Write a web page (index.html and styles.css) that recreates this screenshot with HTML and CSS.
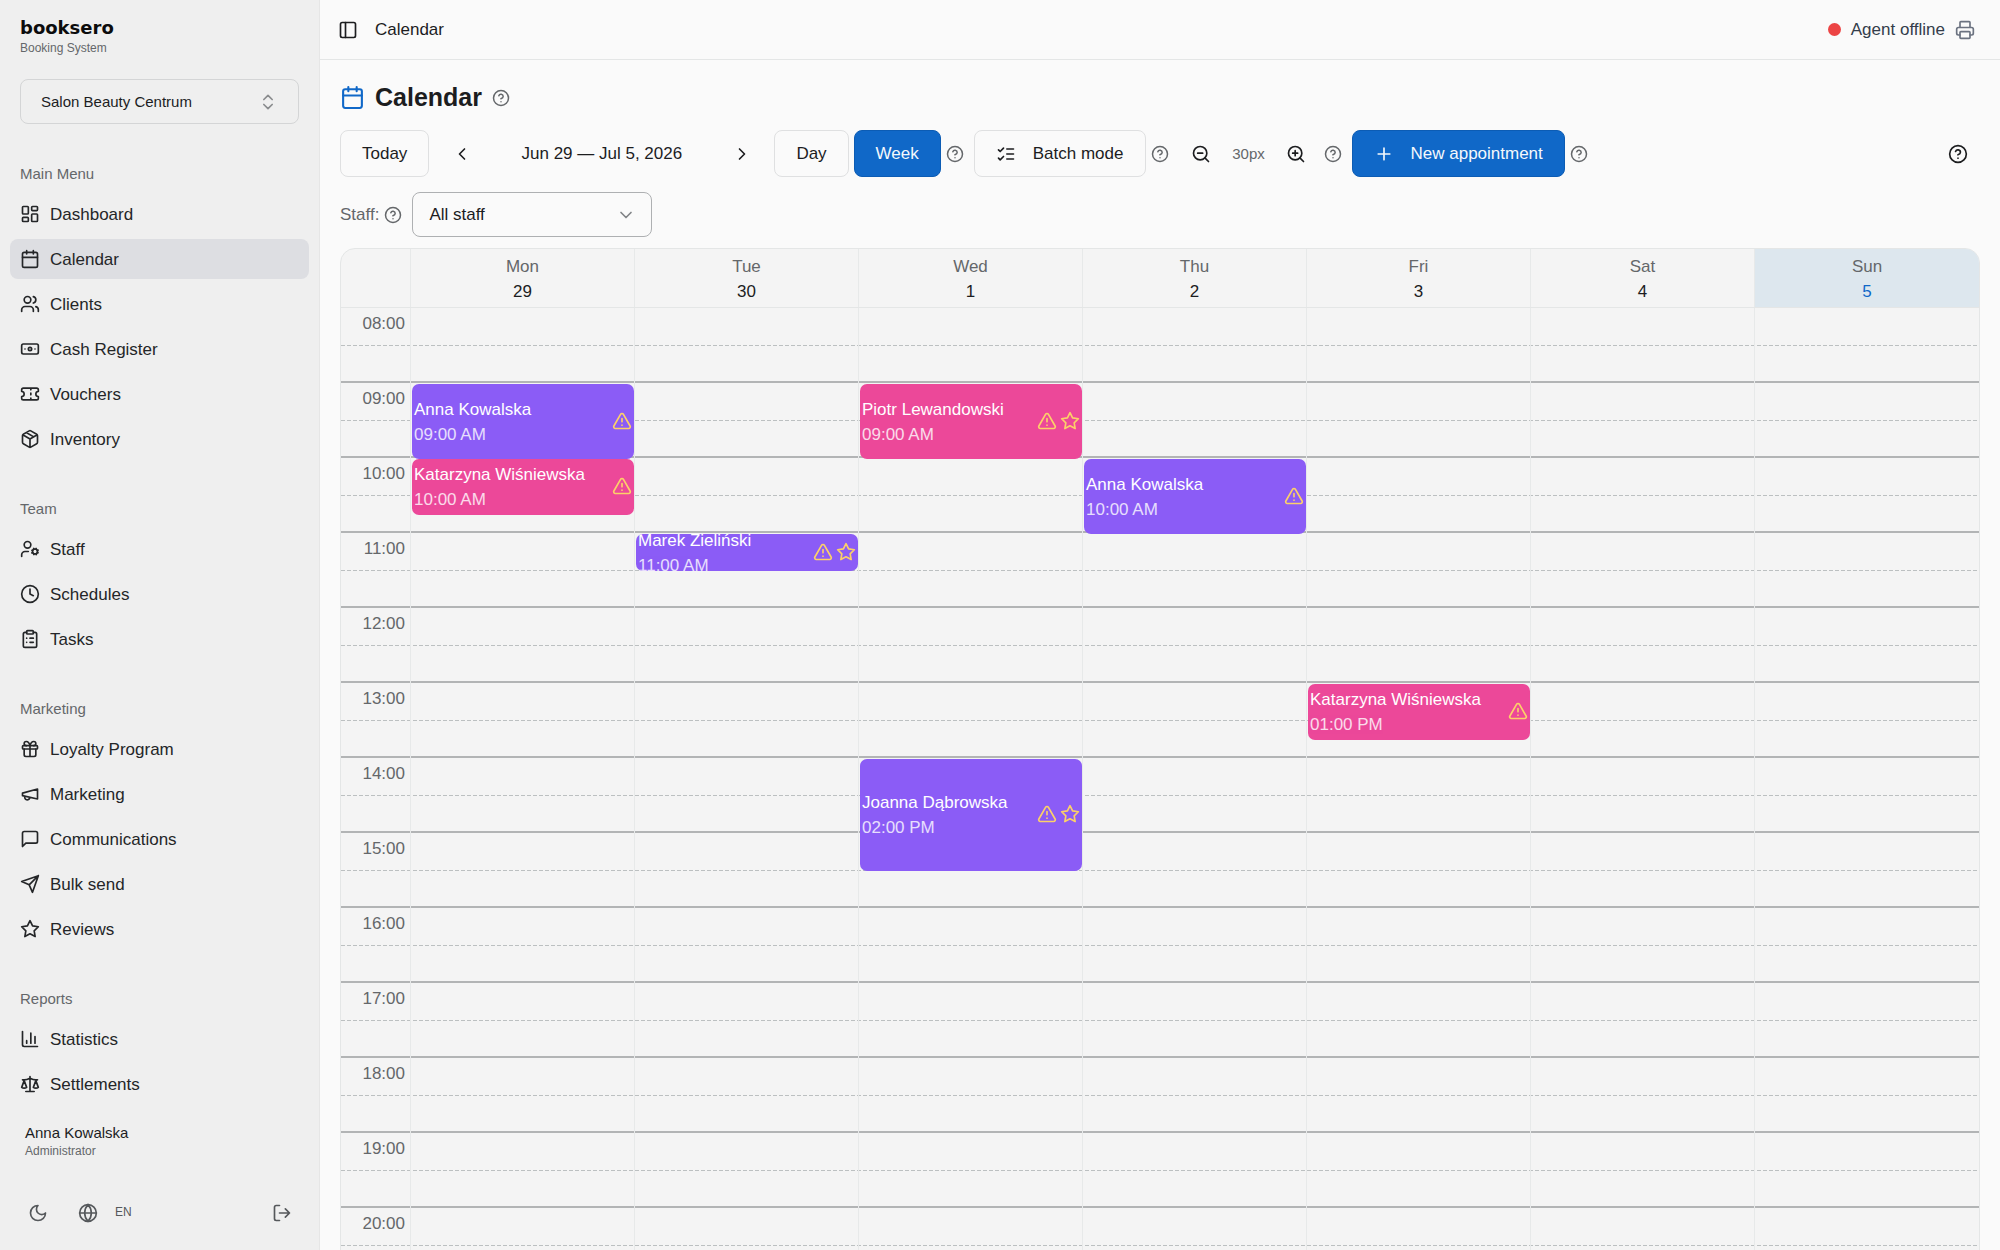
FILE: index.html
```html
<!DOCTYPE html>
<html lang="en">
<head>
<meta charset="utf-8">
<meta name="viewport" content="width=device-width, initial-scale=1">
<title>Calendar – booksero</title>
<link rel="stylesheet" href="styles.css">
</head>
<body>
<svg class="sprite" aria-hidden="true">
  <symbol id="calendar" viewBox="0 0 24 24"><path d="M8 2v4M16 2v4M3 10h18"/><rect width="18" height="18" x="3" y="4" rx="2"/></symbol>
  <symbol id="help" viewBox="0 0 24 24"><circle cx="12" cy="12" r="10"/><path d="M9.09 9a3 3 0 0 1 5.83 1c0 2-3 3-3 3M12 17h.01"/></symbol>
  <symbol id="warning" viewBox="0 0 24 24"><path d="m21.73 18-8-14a2 2 0 0 0-3.48 0l-8 14A2 2 0 0 0 4 21h16a2 2 0 0 0 1.73-3M12 9v4M12 17h.01"/></symbol>
  <symbol id="star" viewBox="0 0 24 24"><path d="m12 2 3.09 6.26L22 9.27l-5 4.87 1.18 6.88L12 17.77l-6.18 3.25L7 14.14 2 9.27l6.91-1.01L12 2z"/></symbol>
</svg>
<div class="app">
  <aside class="sidebar">
    <div class="brand">
      <span class="brand-name">booksero</span>
      <span class="brand-sub">Booking System</span>
    </div>
    <button class="salon" type="button">
      <span>Salon Beauty Centrum</span>
      <svg class="icon" viewBox="0 0 24 24"><path d="m7 15 5 5 5-5M7 9l5-5 5 5"/></svg>
    </button>
    <nav class="nav">
      <section class="group">
        <h2 class="group-title">Main Menu</h2>
        <a class="item" href="#"><svg class="icon" viewBox="0 0 24 24"><rect width="7" height="9" x="3" y="3" rx="1"/><rect width="7" height="5" x="14" y="3" rx="1"/><rect width="7" height="9" x="14" y="12" rx="1"/><rect width="7" height="5" x="3" y="16" rx="1"/></svg>Dashboard</a>
        <a class="item active" href="#" aria-current="page"><svg class="icon"><use href="#calendar"/></svg>Calendar</a>
        <a class="item" href="#"><svg class="icon" viewBox="0 0 24 24"><path d="M16 21v-2a4 4 0 0 0-4-4H6a4 4 0 0 0-4 4v2"/><circle cx="9" cy="7" r="4"/><path d="M22 21v-2a4 4 0 0 0-3-3.87M16 3.13a4 4 0 0 1 0 7.75"/></svg>Clients</a>
        <a class="item" href="#"><svg class="icon" viewBox="0 0 24 24"><rect width="20" height="12" x="2" y="6" rx="2"/><circle cx="12" cy="12" r="2"/><path d="M6 12h.01M18 12h.01"/></svg>Cash Register</a>
        <a class="item" href="#"><svg class="icon" viewBox="0 0 24 24"><path d="M2 9a3 3 0 0 1 0 6v2a2 2 0 0 0 2 2h16a2 2 0 0 0 2-2v-2a3 3 0 0 1 0-6V7a2 2 0 0 0-2-2H4a2 2 0 0 0-2 2ZM13 5v2M13 17v2M13 11v2"/></svg>Vouchers</a>
        <a class="item" href="#"><svg class="icon" viewBox="0 0 24 24"><path d="M11 21.73a2 2 0 0 0 2 0l7-4A2 2 0 0 0 21 16V8a2 2 0 0 0-1-1.73l-7-4a2 2 0 0 0-2 0l-7 4A2 2 0 0 0 3 8v8a2 2 0 0 0 1 1.73zM12 22V12M3.29 7 12 12l8.71-5M7.5 4.27l9 5.15"/></svg>Inventory</a>
      </section>
      <section class="group">
        <h2 class="group-title">Team</h2>
        <a class="item" href="#"><svg class="icon" viewBox="0 0 24 24"><circle cx="18" cy="15" r="3"/><circle cx="9" cy="7" r="4"/><path d="M10 15H6a4 4 0 0 0-4 4v2M21.7 16.4l-.9-.3M15.2 13.9l-.9-.3M16.6 18.7l.3-.9M19.1 12.2l.3-.9M19.6 18.7l-.4-1M16.8 12.3l-.4-1M14.3 16.6l1-.4M20.7 13.8l1-.4"/></svg>Staff</a>
        <a class="item" href="#"><svg class="icon" viewBox="0 0 24 24"><circle cx="12" cy="12" r="10"/><path d="M12 6v6l4 2"/></svg>Schedules</a>
        <a class="item" href="#"><svg class="icon" viewBox="0 0 24 24"><rect width="8" height="4" x="8" y="2" rx="1"/><path d="M16 4h2a2 2 0 0 1 2 2v14a2 2 0 0 1-2 2H6a2 2 0 0 1-2-2V6a2 2 0 0 1 2-2h2M12 11h4M12 16h4M8 11h.01M8 16h.01"/></svg>Tasks</a>
      </section>
      <section class="group">
        <h2 class="group-title">Marketing</h2>
        <a class="item" href="#"><svg class="icon" viewBox="0 0 24 24"><rect width="18" height="4" x="3" y="8" rx="1"/><path d="M12 8v13M19 12v7a2 2 0 0 1-2 2H7a2 2 0 0 1-2-2v-7M7.5 8a2.5 2.5 0 0 1 0-5A4.8 8 0 0 1 12 8a4.8 8 0 0 1 4.500-5 2.500 2.500 0 0 1 0 5"/></svg>Loyalty Program</a>
        <a class="item" href="#"><svg class="icon" viewBox="0 0 24 24"><path d="m3 11 18-5v12L3 14v-3zM11.600 16.800a3 3 0 1 1-5.800-1.600"/></svg>Marketing</a>
        <a class="item" href="#"><svg class="icon" viewBox="0 0 24 24"><path d="M21 15a2 2 0 0 1-2 2H7l-4 4V5a2 2 0 0 1 2-2h14a2 2 0 0 1 2 2z"/></svg>Communications</a>
        <a class="item" href="#"><svg class="icon" viewBox="0 0 24 24"><path d="m22 2-7 20-4-9-9-4ZM22 2 11 13"/></svg>Bulk send</a>
        <a class="item" href="#"><svg class="icon"><use href="#star"/></svg>Reviews</a>
      </section>
      <section class="group">
        <h2 class="group-title">Reports</h2>
        <a class="item" href="#"><svg class="icon" viewBox="0 0 24 24"><path d="M3 3v16a2 2 0 0 0 2 2h16M18 17V9M13 17V5M8 17v-3"/></svg>Statistics</a>
        <a class="item" href="#"><svg class="icon" viewBox="0 0 24 24"><path d="m16 16 3-8 3 8c-.87.65-1.920 1-3 1s-2.130-.35-3-1ZM2 16l3-8 3 8c-.87.65-1.920 1-3 1s-2.130-.35-3-1ZM7 21h10M12 3v18M3 7h2c2 0 5-1 7-2 2 1 5 2 7 2h2"/></svg>Settlements</a>
      </section>
    </nav>
    <footer class="account">
      <div class="user">
        <span class="user-name">Anna Kowalska</span>
        <span class="user-role">Administrator</span>
      </div>
      <div class="account-actions">
        <button class="ghost" type="button" aria-label="Dark mode"><svg class="icon" viewBox="0 0 24 24"><path d="M12 3a6 6 0 0 0 9 9 9 9 0 1 1-9-9Z"/></svg></button>
        <button class="ghost language" type="button"><svg class="icon" viewBox="0 0 24 24"><circle cx="12" cy="12" r="10"/><path d="M12 2a14.500 14.500 0 0 0 0 20 14.500 14.500 0 0 0 0-20M2 12h20"/></svg>EN</button>
        <button class="ghost logout" type="button" aria-label="Log out"><svg class="icon" viewBox="0 0 24 24"><path d="M9 21H5a2 2 0 0 1-2-2V5a2 2 0 0 1 2-2h4M16 17l5-5-5-5M21 12H9"/></svg></button>
      </div>
    </footer>
  </aside>

  <div class="page">
    <header class="topbar">
      <button class="plain" type="button" aria-label="Toggle sidebar"><svg class="icon" viewBox="0 0 24 24"><rect width="18" height="18" x="3" y="3" rx="2"/><path d="M9 3v18"/></svg></button>
      <span>Calendar</span>
      <div class="agent">
        <span class="dot"></span>
        <span>Agent offline</span>
        <svg class="icon" viewBox="0 0 24 24"><path d="M6 18H4a2 2 0 0 1-2-2v-5a2 2 0 0 1 2-2h16a2 2 0 0 1 2 2v5a2 2 0 0 1-2 2h-2M6 9V3a1 1 0 0 1 1-1h10a1 1 0 0 1 1 1v6"/><rect width="12" height="8" x="6" y="14" rx="1"/></svg>
      </div>
    </header>
    <main class="content">
      <div class="title">
        <svg class="icon title-icon"><use href="#calendar"/></svg>
        <h1>Calendar</h1>
        <svg class="icon help"><use href="#help"/></svg>
      </div>
      <div class="toolbar">
        <button class="btn" type="button">Today</button>
        <button class="ghost" type="button" aria-label="Previous week"><svg class="icon" viewBox="0 0 24 24"><path d="m15 18-6-6 6-6"/></svg></button>
        <span class="range">Jun 29 — Jul 5, 2026</span>
        <button class="ghost" type="button" aria-label="Next week"><svg class="icon" viewBox="0 0 24 24"><path d="m9 18 6-6-6-6"/></svg></button>
        <div class="cluster">
          <button class="btn" type="button">Day</button>
          <button class="btn primary" type="button">Week</button>
          <svg class="icon help"><use href="#help"/></svg>
        </div>
        <div class="cluster">
          <button class="btn with-icon" type="button"><svg class="icon" viewBox="0 0 24 24"><path d="m3 17 2 2 4-4M3 7l2 2 4-4M13 6h8M13 12h8M13 18h8"/></svg>Batch mode</button>
          <svg class="icon help"><use href="#help"/></svg>
        </div>
        <div class="cluster">
          <button class="ghost" type="button" aria-label="Zoom out"><svg class="icon" viewBox="0 0 24 24"><circle cx="11" cy="11" r="8"/><path d="m21 21-4.350-4.350M8 11h6"/></svg></button>
          <span class="zoom">30px</span>
          <button class="ghost" type="button" aria-label="Zoom in"><svg class="icon" viewBox="0 0 24 24"><circle cx="11" cy="11" r="8"/><path d="m21 21-4.350-4.350M8 11h6M11 8v6"/></svg></button>
          <svg class="icon help"><use href="#help"/></svg>
        </div>
        <div class="cluster">
          <button class="btn primary with-icon" type="button"><svg class="icon" viewBox="0 0 24 24"><path d="M5 12h14M12 5v14"/></svg>New appointment</button>
          <svg class="icon help"><use href="#help"/></svg>
        </div>
        <button class="ghost tour" type="button" aria-label="Help"><svg class="icon"><use href="#help"/></svg></button>
      </div>
      <div class="filter">
        <label for="staff">Staff:</label>
        <svg class="icon help"><use href="#help"/></svg>
        <div class="select">
          <select id="staff"><option>All staff</option><option>Anna Kowalska</option></select>
          <svg class="icon" viewBox="0 0 24 24"><path d="m6 9 6 6 6-6"/></svg>
        </div>
      </div>

      <section class="week">
        <div class="week-head">
          <div class="corner"></div>
          <div class="day-head"><span>Mon</span><b>29</b></div>
          <div class="day-head"><span>Tue</span><b>30</b></div>
          <div class="day-head"><span>Wed</span><b>1</b></div>
          <div class="day-head"><span>Thu</span><b>2</b></div>
          <div class="day-head"><span>Fri</span><b>3</b></div>
          <div class="day-head"><span>Sat</span><b>4</b></div>
          <div class="day-head today"><span>Sun</span><b>5</b></div>
        </div>
        <div class="week-body">
          <div class="hours">
            <div class="hour"><time>08:00</time></div>
            <div class="hour"><time>09:00</time></div>
            <div class="hour"><time>10:00</time></div>
            <div class="hour"><time>11:00</time></div>
            <div class="hour"><time>12:00</time></div>
            <div class="hour"><time>13:00</time></div>
            <div class="hour"><time>14:00</time></div>
            <div class="hour"><time>15:00</time></div>
            <div class="hour"><time>16:00</time></div>
            <div class="hour"><time>17:00</time></div>
            <div class="hour"><time>18:00</time></div>
            <div class="hour"><time>19:00</time></div>
            <div class="hour"><time>20:00</time></div>
          </div>
          <div class="days">
            <div class="corner"></div>
            <div class="day">
              <article class="event violet" style="top:76px;height:75px"><div class="who"><span>Anna Kowalska</span><time>09:00 AM</time></div><svg class="icon"><use href="#warning"/></svg></article>
              <article class="event pink" style="top:151px;height:56px"><div class="who"><span>Katarzyna Wiśniewska</span><time>10:00 AM</time></div><svg class="icon"><use href="#warning"/></svg></article>
            </div>
            <div class="day">
              <article class="event violet" style="top:226px;height:37px"><div class="who"><span>Marek Zieliński</span><time>11:00 AM</time></div><svg class="icon"><use href="#warning"/></svg><svg class="icon"><use href="#star"/></svg></article>
            </div>
            <div class="day">
              <article class="event pink" style="top:76px;height:75px"><div class="who"><span>Piotr Lewandowski</span><time>09:00 AM</time></div><svg class="icon"><use href="#warning"/></svg><svg class="icon"><use href="#star"/></svg></article>
              <article class="event violet" style="top:451px;height:112px"><div class="who"><span>Joanna Dąbrowska</span><time>02:00 PM</time></div><svg class="icon"><use href="#warning"/></svg><svg class="icon"><use href="#star"/></svg></article>
            </div>
            <div class="day">
              <article class="event violet" style="top:151px;height:75px"><div class="who"><span>Anna Kowalska</span><time>10:00 AM</time></div><svg class="icon"><use href="#warning"/></svg></article>
            </div>
            <div class="day">
              <article class="event pink" style="top:376px;height:56px"><div class="who"><span>Katarzyna Wiśniewska</span><time>01:00 PM</time></div><svg class="icon"><use href="#warning"/></svg></article>
            </div>
            <div class="day"></div>
            <div class="day"></div>
          </div>
        </div>
      </section>
    </main>
  </div>
</div>
</body>
</html>
```

FILE: styles.css
```css
:root {
  --ink: #1c1d1f;
  --muted: #64676a;
  --line: #e4e6e6;
  --blue: #1068c8;
  --slot: 75px;
  --time-col: 70px;
}

* {
  box-sizing: border-box;
}

body {
  margin: 0;
  background: #fafafa;
  color: var(--ink);
  font-family: "Liberation Sans", Arial, sans-serif;
  font-size: 17px;
  line-height: 25px;
}

button,
select {
  margin: 0;
  padding: 0;
  border: 0;
  background: none;
  color: inherit;
  font: inherit;
  cursor: pointer;
}

.sprite {
  display: none;
}

.icon {
  display: block;
  flex: none;
  width: 20px;
  height: 20px;
  fill: none;
  stroke: currentColor;
  stroke-width: 2;
  stroke-linecap: round;
  stroke-linejoin: round;
}

.help {
  width: 18px;
  height: 18px;
  color: var(--muted);
}

.app {
  display: flex;
  height: 100vh;
  overflow: hidden;
}

/* Sidebar */
.sidebar {
  display: flex;
  flex: none;
  flex-direction: column;
  width: 320px;
  border-right: 1px solid #e6e6e6;
  background: #efefef;
}

.brand {
  display: flex;
  flex-direction: column;
  padding: 18px 20px 20px;
}

.brand-name {
  color: #0c0c0d;
  font-family: "DejaVu Sans", sans-serif;
  font-size: 18px;
  font-weight: 700;
  line-height: 20px;
}

.brand-sub {
  color: var(--muted);
  font-size: 12px;
  line-height: 21px;
}

.salon {
  display: flex;
  align-items: center;
  justify-content: space-between;
  height: 45px;
  margin: 0 20px 20px;
  padding: 0 20px;
  border: 1px solid #d4d5d6;
  border-radius: 8px;
  font-size: 15px;
}

.salon .icon {
  color: #8a8c8e;
}

.nav {
  display: flex;
  flex: 1;
  flex-direction: column;
  gap: 30px;
  min-height: 0;
  padding: 10px 10px 0;
  overflow-y: auto;
  scrollbar-width: none;
}

.group {
  display: flex;
  flex-direction: column;
  gap: 5px;
}

.group-title {
  margin: 0 0 -5px;
  padding: 0 10px;
  color: var(--muted);
  font-size: 15px;
  font-weight: 400;
  line-height: 40px;
}

.item {
  display: flex;
  align-items: center;
  gap: 10px;
  height: 40px;
  padding: 0 10px;
  border-radius: 8px;
  color: #242628;
  text-decoration: none;
}

.item.active {
  background: #dddee2;
}

.account {
  display: flex;
  flex: none;
  flex-direction: column;
  gap: 30px;
  padding: 15px 15px;
}

.user {
  display: flex;
  flex-direction: column;
  padding: 0 10px;
}

.user-name {
  font-size: 15px;
  line-height: 20px;
}

.user-role {
  color: var(--muted);
  font-size: 12px;
  line-height: 17px;
}

.account-actions {
  display: flex;
  gap: 5px;
  color: #55585b;
}

.ghost {
  display: flex;
  flex: none;
  align-items: center;
  justify-content: center;
  width: 45px;
  height: 45px;
}

.language {
  gap: 17px;
  width: auto;
  padding: 0 13px;
  font-size: 12px;
}

.logout {
  margin-left: auto;
}

/* Page */
.page {
  display: flex;
  flex: 1;
  flex-direction: column;
  min-width: 0;
}

.topbar {
  display: flex;
  flex: none;
  align-items: center;
  gap: 17px;
  height: 60px;
  padding: 0 25px 0 18px;
  border-bottom: 1px solid var(--line);
}

.agent {
  display: flex;
  align-items: center;
  gap: 10px;
  margin-left: auto;
  color: #333d4b;
}

.agent .icon {
  color: #6b7280;
}

.dot {
  width: 13px;
  height: 13px;
  border-radius: 50%;
  background: #ec4444;
}

.content {
  display: flex;
  flex: 1;
  flex-direction: column;
  min-height: 0;
  padding: 20px 20px 0;
  overflow: hidden;
}

.title {
  display: flex;
  flex: none;
  align-items: center;
  gap: 10px;
  height: 35px;
  margin-bottom: 15px;
}

.title-icon {
  width: 25px;
  height: 25px;
  color: var(--blue);
}

h1 {
  margin: 0;
  font-size: 25px;
  line-height: 35px;
}

.toolbar {
  display: flex;
  flex: none;
  align-items: center;
  gap: 10px;
  margin-bottom: 15px;
}

.cluster {
  display: flex;
  align-items: center;
  gap: 5px;
}

.btn {
  display: flex;
  align-items: center;
  height: 47px;
  padding: 0 21px;
  border: 1px solid #dfe0e1;
  border-radius: 8px;
  white-space: nowrap;
}

.btn.with-icon {
  gap: 17px;
}

.btn.primary {
  border-color: #0c5cb4;
  background: var(--blue);
  color: #f4f8fc;
}

.range {
  min-width: 215px;
  text-align: center;
}

.zoom {
  min-width: 40px;
  color: var(--muted);
  font-size: 15px;
  text-align: center;
}

.tour {
  margin-left: auto;
}

.filter {
  display: flex;
  flex: none;
  align-items: center;
  gap: 5px;
  margin-bottom: 11px;
  color: var(--muted);
}

.select {
  display: grid;
  align-items: center;
  width: 240px;
  margin-left: 5px;
}

.select > * {
  grid-area: 1 / 1;
}

.select select {
  height: 45px;
  padding: 0 16px;
  border: 1px solid #aeb0b2;
  border-radius: 8px;
  color: var(--ink);
  appearance: none;
}

.select .icon {
  justify-self: end;
  margin-right: 16px;
  color: #808386;
  pointer-events: none;
}

/* Week grid */
.week {
  flex: none;
  border: 1px solid var(--line);
  border-radius: 15px;
  background: #f4f4f4;
  overflow: hidden;
}

.week-head,
.days {
  display: grid;
  grid-template-columns: var(--time-col) repeat(7, 1fr);
}

.week-head {
  border-bottom: 1px solid var(--line);
}

.corner,
.day,
.day-head {
  border-right: 1px solid #e7e9e9;
}

.day:last-child,
.day-head:last-child {
  border-right: 0;
}

.day-head {
  display: flex;
  flex-direction: column;
  align-items: center;
  padding: 5px 0 3px;
  color: var(--muted);
}

.day-head b {
  color: var(--ink);
  font-weight: 400;
}

.day-head.today {
  background: #dde7ee;
}

.day-head.today b {
  color: var(--blue);
}

.week-body {
  display: grid;
}

.hours,
.days {
  grid-area: 1 / 1;
}

.hour {
  display: grid;
  grid-template-rows: 38px 1fr;
  height: var(--slot);
  border-bottom: 2px solid #b2b4b5;
  color: var(--muted);
}

/* Half-hour line */
.hour::before {
  content: "";
  grid-area: 1 / 1;
  align-self: end;
  height: 1px;
  background: repeating-linear-gradient(to right, #bcc0c1 0 4px, transparent 4px 6px);
}

.hour time {
  grid-area: 1 / 1;
  justify-self: start;
  width: 64px;
  padding-top: 3px;
  text-align: right;
}

.day {
  position: relative;
}

.event {
  position: absolute;
  right: 0;
  left: 1px;
  display: flex;
  align-items: center;
  gap: 3px;
  padding: 0 2px;
  border-radius: 7px;
  color: #fff;
  overflow: hidden;
}

.event.violet {
  background: #8b5cf6;
}

.event.pink {
  background: #ec4899;
}

.event .icon {
  margin-bottom: 2px;
  color: #fcd069;
}

.who {
  display: flex;
  flex: 1;
  flex-direction: column;
  min-width: 0;
  white-space: nowrap;
}

.who time {
  opacity: 0.8;
}
```
